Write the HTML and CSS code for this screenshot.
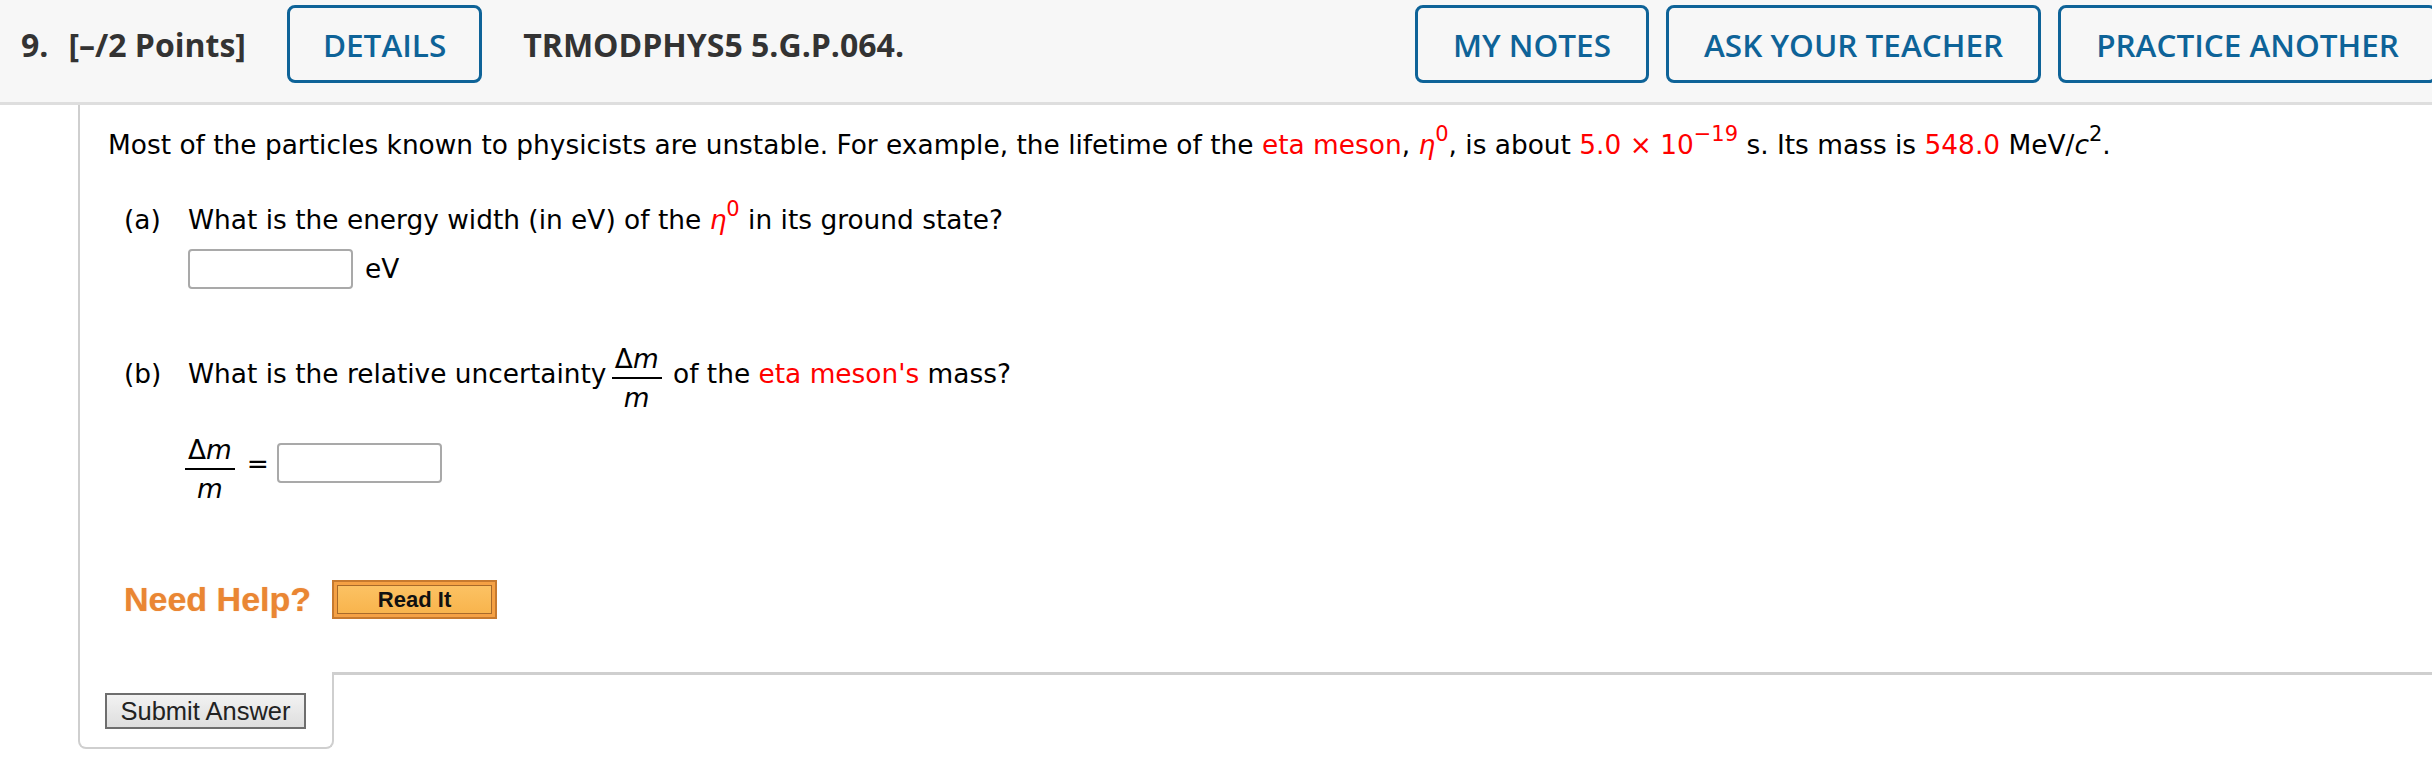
FILE: index.html
```html
<!DOCTYPE html>
<html>
<head>
<meta charset="utf-8">
<link rel="stylesheet" href="styles.css">
</head>
<body>
<header class="qhead">
  <span class="qnum">9.</span>
  <span class="qpts">[–/2 Points]</span>
  <button class="hbtn details">DETAILS</button>
  <span class="qcode">TRMODPHYS5 5.G.P.064.</span>
  <div class="hright">
    <button class="hbtn">MY NOTES</button>
    <button class="hbtn">ASK YOUR TEACHER</button>
    <button class="hbtn last">PRACTICE ANOTHER</button>
  </div>
</header>
<div class="qbox">
  <div class="qcontent">
    <p class="intro">Most of the particles known to physicists are unstable. For example, the lifetime of the <span class="red">eta meson</span>, <span class="red"><i>η</i><sup>0</sup></span>, is about <span class="red">5.0 × 10<sup>−19</sup></span> s. Its mass is <span class="red">548.0</span> MeV/<i>c</i><sup>2</sup>.</p>

    <div class="part part-a">
      <span class="plabel">(a)</span>
      <div class="pbody">
        <div class="pq">What is the energy width (in eV) of the <span class="red"><i>η</i><sup>0</sup></span> in its ground state?</div>
        <div class="ans"><span class="inbox w1"></span><span class="unit">eV</span></div>
      </div>
    </div>

    <div class="part part-b">
      <span class="plabel">(b)</span>
      <div class="pbody">
        <div class="pq">What is the relative uncertainty <span class="frac"><span class="num">Δ<i>m</i></span><span class="den"><i>m</i></span></span> of the <span class="red">eta meson's</span> mass?</div>
        <div class="ans ans-b"><span class="frac big"><span class="num">Δ<i>m</i></span><span class="den"><i>m</i></span></span><span class="eq">=</span><span class="inbox w2"></span></div>
      </div>
    </div>

    <div class="help">
      <span class="needhelp">Need Help?</span>
      <span class="readit"><span class="readit-in">Read It</span></span>
    </div>
  </div>
  <div class="qfoot">
    <div class="tab"><button class="submit">Submit Answer</button></div>
    <div class="rest"></div>
  </div>
</div>
</body>
</html>
```

FILE: styles.css
```css
html, body {
  margin: 0;
  padding: 0;
  background: #fff;
  overflow: hidden;
}
body {
  width: 2432px;
  height: 760px;
  font-family: "DejaVu Sans", Verdana, sans-serif;
  color: #000;
}

.qhead {
  display: flex;
  align-items: center;
  background: #f7f7f7;
  border-bottom: 3px solid #dedede;
  height: 78px;
  padding: 5px 0 19px 21px;
  font-family: "Open Sans", sans-serif;
  font-weight: 700;
  color: #333;
  font-size: 32px;
  white-space: nowrap;
}
.qnum { margin-right: 20px; }
.qpts { margin-right: 41px; }
.qcode { margin-left: 41px; }
.hbtn {
  box-sizing: border-box;
  height: 78px;
  padding: 0 35px;
  border: 3px solid #0e6398;
  border-radius: 8px;
  background: #f7f7f7;
  color: #0e6398;
  font-family: "Open Sans", sans-serif;
  font-weight: 600;
  font-size: 31.5px;
  flex: none;
}
.hbtn.details { padding: 0 33px; }
.hright {
  margin-left: auto;
  display: flex;
  gap: 17px;
  margin-right: -5px;
}

.qbox {
  margin-left: 78px;
}
.qcontent {
  border-left: 2px solid #cfcfcf;
  padding: 0 0 0 28px;
  height: 567px;
  font-size: 26.4px;
}
.intro {
  margin: 0;
  padding-top: 22px;
  line-height: 36px;
}
.red { color: #f00; }
sup {
  font-size: 21px;
  line-height: 0;
  vertical-align: 13px;
}
i { font-style: italic; }

.part {
  display: flex;
  align-items: baseline;
  padding-left: 16px;
  line-height: 36px;
}
.plabel { width: 64px; flex: none; }
.part-a { margin-top: 39px; }
.pq { white-space: nowrap; }
.ans {
  display: flex;
  align-items: center;
  margin-top: 11px;
}
.inbox {
  box-sizing: border-box;
  display: inline-block;
  height: 40px;
  border: 2px solid #a9a9a9;
  border-radius: 4px;
  background: #fff;
  flex: none;
}
.w1 { width: 165px; }
.w2 { width: 165px; }
.unit { margin-left: 12px; }

.part-b { margin-top: 55px; }
.frac {
  display: inline-flex;
  flex-direction: column;
  align-items: stretch;
  text-align: center;
  vertical-align: 15px;
  line-height: 30px;
  margin: 0 3px 0 -3px;
}
.frac .num {
  border-bottom: 2px solid #000;
  padding: 0 3px 3px;
}
.frac .den { padding-top: 4px; }

.ans-b {
  align-items: flex-start;
  margin-top: 22px;
}
.frac.big { margin: 0 12px 0 -3px; }
.eq { margin: 11px 8px 0 0; line-height: 36px; }
.ans-b .inbox { margin-top: 8px; }

.help {
  display: flex;
  align-items: center;
  margin-top: 76px;
  padding-left: 16px;
}
.needhelp {
  font-family: "Liberation Sans", Arial, sans-serif;
  font-weight: 700;
  font-size: 34px;
  color: #ea8633;
  text-shadow: 0 0 1px rgba(234,134,51,0.6);
  margin-right: 21px;
}
.readit {
  box-sizing: border-box;
  display: inline-flex;
  width: 165px;
  height: 39px;
  border: 2px solid #c77a2e;
  background: #f5a144;
  padding: 3px;
}
.readit-in {
  flex: 1;
  display: flex;
  align-items: center;
  justify-content: center;
  border: 1px solid #a86a2a;
  background: linear-gradient(#fcc263, #f8b44d);
  font-family: "Liberation Sans", Arial, sans-serif;
  font-weight: 700;
  font-size: 22px;
  color: #111;
}

.qfoot {
  display: flex;
}
.tab {
  box-sizing: border-box;
  width: 256px;
  height: 77px;
  border: 2px solid #cfcfcf;
  border-top: none;
  border-radius: 0 0 8px 8px;
  padding: 21px 0 0 25px;
}
.submit {
  box-sizing: border-box;
  width: 201px;
  height: 36px;
  border: 2px solid #6e6e6e;
  background: linear-gradient(#f2f2f2, #dedede);
  font-family: "Liberation Sans", Arial, sans-serif;
  font-size: 25.5px;
  color: #222;
  padding: 0;
}
.rest {
  flex: 1;
  border-top: 3px solid #cfcfcf;
}
```
